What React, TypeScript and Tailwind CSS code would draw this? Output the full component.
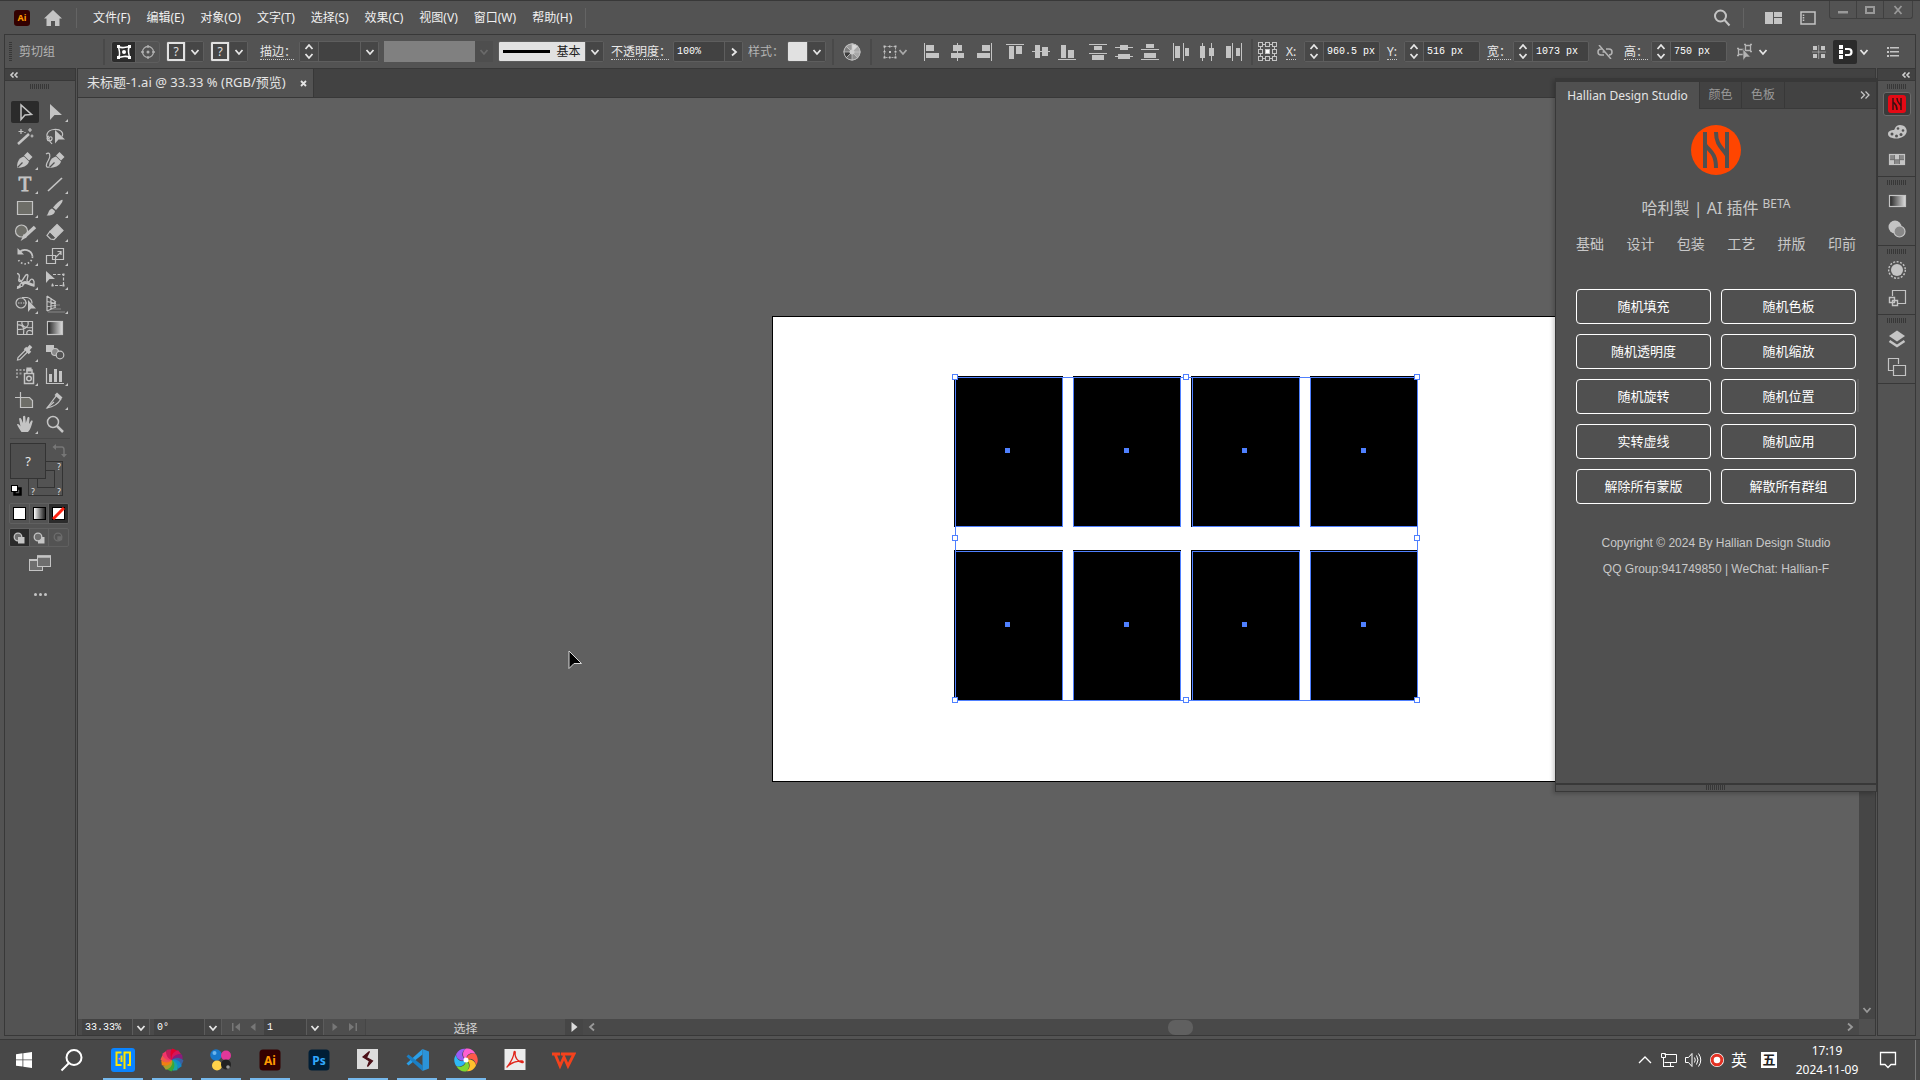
import React, { type ReactNode } from "react";

const UI = "font-['Noto_Sans','Noto_Sans_CJK_SC',sans-serif]";
const FIELD_TEXT = "font-['Liberation_Mono','Noto_Sans_CJK_SC',monospace] text-[10px] text-white";

/* ---------- small shared pieces ---------- */

function Chevron({ dir = "down", className = "text-[#e6e6e6]" }: { dir?: "down" | "up" | "right" | "left"; className?: string }) {
  const d = {
    down: "M1.5 3l3.5 4 3.5-4",
    up: "M1.5 7l3.5-4 3.5 4",
    right: "M3 1.5l4 3.5-4 3.5",
    left: "M7 1.5l-4 3.5 4 3.5",
  }[dir];
  return (
    <svg viewBox="0 0 10 10" className={`size-[10px] shrink-0 ${className}`} fill="none" stroke="currentColor" strokeWidth="1.8">
      <path d={d} />
    </svg>
  );
}

function DropButton({ label, dir = "down" }: { label: string; dir?: "down" | "right" }) {
  return (
    <button aria-label={label} className="flex h-full w-[18px] shrink-0 items-center justify-center border-l border-[#5e5e5e] bg-[#464646]">
      <Chevron dir={dir} />
    </button>
  );
}

function Spinner({ label }: { label: string }) {
  return (
    <div className="flex h-full w-[18px] shrink-0 flex-col items-center justify-center bg-[#484848]">
      <button aria-label={`${label} +`} className="flex h-[9px] items-center"><Chevron dir="up" /></button>
      <button aria-label={`${label} -`} className="flex h-[9px] items-center"><Chevron /></button>
    </div>
  );
}

function Box({ children, className = "" }: { children: ReactNode; className?: string }) {
  return <div className={`flex h-[21px] shrink-0 items-stretch overflow-hidden rounded-[2px] border border-[#5e5e5e] bg-[#424242] ${className}`}>{children}</div>;
}

function Sep({ className = "" }: { className?: string }) {
  return <div className={`h-[26px] w-[2px] shrink-0 bg-[#494949] ${className}`} />;
}

const dotted = "shrink-0 whitespace-nowrap border-b border-dotted border-[#c8c8c8] text-[12px] leading-[15px] text-[#e8e8e8]";

function NumField({ id, label, value, className = "" }: { id: string; label: string; value: string; className?: string }) {
  return (
    <div className={`flex shrink-0 items-center justify-between ${className}`}>
      <label htmlFor={id} className={dotted}>{label}</label>
      <Box className="w-[76px]">
        <Spinner label={label} />
        <input id={id} defaultValue={value} className={`w-0 flex-1 border-l border-[#5e5e5e] bg-transparent pl-[3px] ${FIELD_TEXT}`} />
      </Box>
    </div>
  );
}

function Grip({ className = "" }: { className?: string }) {
  return (
    <svg viewBox="0 0 20 5" className={`h-[5px] w-[20px] shrink-0 text-[#373737] ${className}`} fill="currentColor">
      {[0, 2, 4, 6, 8, 10, 12, 14, 16, 18].map((x) => <rect key={x} x={x} width="1" height="5" />)}
    </svg>
  );
}

/* ---------- menu bar ---------- */

const MENUS = ["文件(F)", "编辑(E)", "对象(O)", "文字(T)", "选择(S)", "效果(C)", "视图(V)", "窗口(W)", "帮助(H)"];

function MenuBar() {
  return (
    <header className="flex h-[34px] shrink-0 items-center border-t border-[#383838] pl-[14px]">
      <span className="flex size-4 items-center justify-center rounded-[3px] bg-[#330000] text-[9px] font-bold text-[#ff9a00]">Ai</span>
      <button aria-label="主页" className="ml-[13px]">
        <svg viewBox="0 0 20 16" className="h-4 w-5 text-[#c4c4c4]" fill="currentColor">
          <path d="M10 0L1 8.5h2.5V16H8v-5h4v5h4.500V8.500H19z" />
        </svg>
      </button>
      <div className="ml-[13px] h-5 w-px bg-[#646464]" />
      <nav className="ml-[16px] flex items-center gap-4 text-[12px] text-[#f0f0f0]">
        {MENUS.map((m) => <button key={m} className="whitespace-nowrap">{m}</button>)}
      </nav>
      <div className="ml-[13px] h-5 w-px bg-[#646464]" />
      <div className="ml-auto flex h-full items-center">
        <button aria-label="搜索">
          <svg viewBox="0 0 18 18" className="size-[18px] text-[#c4c4c4]" fill="none" stroke="currentColor" strokeWidth="2">
            <circle cx="7.500" cy="7" r="5.500" /><path d="M11.500 11l5 5.500" />
          </svg>
        </button>
        <div className="ml-[12px] h-5 w-px bg-[#646464]" />
        <button aria-label="排列文档" className="ml-[21px]">
          <svg viewBox="0 0 18 12" className="h-3 w-[18px] text-[#c4c4c4]" fill="currentColor">
            <path d="M0 0h8v12H0zM9 0h8v5H9zM9 6h8v6H9z" />
          </svg>
        </button>
        <button aria-label="切换工作区" className="ml-[17px]">
          <svg viewBox="0 0 16 14" className="h-[14px] w-4 text-[#c4c4c4]" fill="none" stroke="currentColor" strokeWidth="1.500">
            <path d="M1 1h14v12H1z" /><path d="M3.500 3.500v1.500M3.500 6v1.500M3.500 8.500v1.500" />
          </svg>
        </button>
        <div className="mr-[7px] ml-[13px] flex h-[18px] self-start rounded-b-[3px] border border-t-0 border-[#404040] text-[#999]">
          <button aria-label="最小化" className="flex w-[27px] items-center justify-center border-r border-[#404040]">
            <svg viewBox="0 0 10 10" className="size-[10px]" fill="currentColor"><path d="M0 6h10v2.500H0z" /></svg>
          </button>
          <button aria-label="最大化" className="flex w-[27px] items-center justify-center border-r border-[#404040]">
            <svg viewBox="0 0 10 8" className="h-2 w-[10px]" fill="none" stroke="currentColor" strokeWidth="2"><path d="M1 1h8v6H1z" /></svg>
          </button>
          <button aria-label="关闭" className="flex w-[28px] items-center justify-center">
            <svg viewBox="0 0 10 10" className="size-[10px]" fill="none" stroke="currentColor" strokeWidth="1.800"><path d="M1.500 1l7 8M8.500 1l-7 8" /></svg>
          </button>
        </div>
      </div>
    </header>
  );
}

/* ---------- control bar ---------- */

type R = [number, number, number, number];
const ALIGN: { name: string; r: R[] }[][] = [
  [
    { name: "水平左对齐", r: [[1, 0, 1, 18], [3, 2, 8, 6], [3, 10, 13, 5]] },
    { name: "水平居中对齐", r: [[8, 0, 1, 18], [4, 2, 9, 6], [2, 10, 13, 5]] },
    { name: "水平右对齐", r: [[16, 0, 1, 18], [7, 2, 8, 6], [2, 10, 13, 5]] },
  ],
  [
    { name: "垂直顶对齐", r: [[0, 1, 18, 1], [3, 3, 5, 13], [10, 3, 6, 8]] },
    { name: "垂直居中对齐", r: [[0, 8, 18, 1], [3, 2, 5, 13], [10, 4, 6, 9]] },
    { name: "垂直底对齐", r: [[0, 16, 18, 1], [3, 2, 5, 13], [10, 7, 6, 8]] },
  ],
  [
    { name: "垂直顶分布", r: [[0, 1, 18, 1], [5, 3, 8, 4], [0, 10, 18, 1], [3, 12, 12, 5]] },
    { name: "垂直居中分布", r: [[0, 4, 18, 1], [5, 2, 8, 5], [0, 13, 18, 1], [3, 11, 12, 5]] },
    { name: "垂直底分布", r: [[5, 1, 8, 4], [0, 6, 18, 1], [3, 10, 12, 5], [0, 16, 18, 1]] },
  ],
  [
    { name: "水平左分布", r: [[1, 0, 1, 18], [3, 3, 5, 12], [11, 0, 1, 18], [13, 5, 4, 8]] },
    { name: "水平居中分布", r: [[4, 0, 1, 18], [2, 3, 5, 12], [13, 0, 1, 18], [11, 5, 5, 8]] },
    { name: "水平右分布", r: [[2, 3, 5, 12], [8, 0, 1, 18], [12, 5, 4, 8], [17, 0, 1, 18]] },
  ],
];

function RefPointIcon() {
  const pts = [0, 7, 14];
  return (
    <svg viewBox="0 0 19 19" className="size-[19px] text-[#c4c4c4]" fill="none" stroke="currentColor">
      <path d="M4 2.500h11M4 16.500h11M2.500 4v11M16.500 4v11" />
      {pts.flatMap((y) => pts.map((x) => (
        <rect key={`${x}-${y}`} x={x + 0.5} y={y + 0.5} width="4" height="4" fill={x === 7 && y === 7 ? "#fff" : "#535353"} />
      )))}
    </svg>
  );
}

function PaintSwatch({ label }: { label: string }) {
  return (
    <Box className="w-[38px]">
      <button aria-label={label} className="flex w-[19px] items-center justify-center border-2 border-[#e1e1e1] bg-[#464646] text-[12px] leading-none text-[#e1e1e1]">?</button>
      <DropButton label={`${label}选项`} />
    </Box>
  );
}

function ControlBar() {
  return (
    <div className="mx-1 flex h-[34px] shrink-0 items-center border-x border-t border-[#383838] pl-1">
      <svg viewBox="0 0 3 20" className="h-5 w-[3px] text-[#373737]" fill="currentColor">
        {[0, 2, 4, 6, 8, 10, 12, 14, 16, 18].map((y) => <rect key={y} y={y} width="3" height="1" />)}
      </svg>
      <span className="ml-[7px] w-[84px] text-[12px] text-[#b4b4b4]">剪切组</span>
      <Sep />
      <div className="ml-[6px] flex h-[22px] shrink-0 overflow-hidden rounded-[3px] border border-[#5e5e5e]">
        <button aria-label="编辑剪切路径" className="flex w-[23px] items-center justify-center bg-[#2b2b2b]">
          <svg viewBox="0 0 16 16" className="size-4 text-white" fill="none" stroke="currentColor" strokeWidth="1.500">
            <path d="M2.500 2.500Q5 4 8 3.500t5.500-1Q12 5 12.500 8t1 5.500Q11 12 8 12.500t-5.500 1Q4 11 3.500 8t-1-5.500z" />
            <path d="M1 1h3v3H1zM12 1h3v3h-3zM1 12h3v3H1zM12 12h3v3h-3z" fill="currentColor" stroke="none" />
            <circle cx="8" cy="8" r="2" fill="currentColor" stroke="none" />
          </svg>
        </button>
        <button aria-label="编辑内容" className="flex w-[24px] items-center justify-center border-l border-[#5e5e5e]">
          <svg viewBox="0 0 16 16" className="size-4 text-[#b0b0b0]" fill="none" stroke="currentColor" strokeWidth="1.300">
            <circle cx="8" cy="8" r="5.500" /><path d="M8 1v3M8 12v3M1 8h3M12 8h3" />
            <circle cx="8" cy="8" r="1.500" fill="currentColor" stroke="none" />
          </svg>
        </button>
      </div>
      <div className="ml-[6px] flex gap-[6px]">
        <PaintSwatch label="填色" />
        <PaintSwatch label="描边" />
      </div>
      <label htmlFor="stroke" className={`ml-[12px] w-[34px] ${dotted}`}>描边：</label>
      <Box className="ml-[5px] w-[80px]">
        <Spinner label="描边" />
        <input id="stroke" defaultValue="" className={`w-0 flex-1 border-l border-[#5e5e5e] bg-transparent pl-1 ${FIELD_TEXT}`} />
        <DropButton label="描边粗细" />
      </Box>
      <div className="ml-[5px] h-[21px] w-[91px] shrink-0 bg-[#808080]" />
      <button aria-label="变量宽度配置文件" disabled className="flex h-[21px] w-[18px] shrink-0 items-center justify-center bg-[#4e4e4e]">
        <Chevron className="text-[#6a6a6a]" />
      </button>
      <Box className="ml-[5px] w-[106px]">
        <button className="flex flex-1 items-center justify-center gap-[6px] bg-[#e1e1e1] text-[12px] text-[#222]">
          <span className="h-[3px] w-[47px] bg-black" />基本
        </button>
        <DropButton label="画笔定义" />
      </Box>
      <label htmlFor="opacity" className={`ml-[7px] w-[58px] ${dotted}`}>不透明度：</label>
      <Box className="ml-[4px] w-[70px]">
        <input id="opacity" defaultValue="100%" className={`w-0 flex-1 bg-transparent pl-[3px] ${FIELD_TEXT}`} />
        <DropButton label="不透明度滑块" dir="right" />
      </Box>
      <span className="ml-[5px] w-[36px] shrink-0 overflow-hidden whitespace-nowrap text-[12px] text-[#b4b4b4]">样式：</span>
      <Box className="ml-[3px] w-[39px]">
        <button aria-label="图形样式" className="w-[19px] bg-[#e1e1e1]" />
        <DropButton label="图形样式选项" />
      </Box>
      <Sep className="ml-[6px]" />
      <button aria-label="重新着色图稿" className="ml-[9px] shrink-0">
        <svg viewBox="0 0 18 18" className="size-[18px]">
          <circle cx="9" cy="9" r="8.500" fill="#a8a8a8" />
          <path d="M9 9L9 .5A8.500 8.500 0 0 0 2.500 3.500z" fill="#999" /><path d="M9 9L.5 9A8.500 8.500 0 0 1 2.500 3.500z" fill="#7c7c7c" />
          <path d="M9 9L.5 9A8.500 8.500 0 0 0 3 15z" fill="#3c3c3c" /><path d="M9 9L3 15A8.500 8.500 0 0 0 9 17.500z" fill="#6a6a6a" />
          <path d="M9 9V.5A8.500 8.500 0 0 1 15 3z" fill="#d8d8d8" /><path d="M9 9L15 15A8.500 8.500 0 0 1 9 17.500z" fill="#8f8f8f" />
          <circle cx="9" cy="9" r="8" fill="none" stroke="#bbb" />
          <path d="M9 .5v17M.5 9h17M3 3l12 12M15 3L3 15" stroke="#c8c8c8" strokeWidth=".7" />
          <circle cx="9" cy="9" r="2.500" fill="#ccc" />
        </svg>
      </button>
      <Sep className="ml-[9px]" />
      <button aria-label="对齐所选对象" className="ml-[10px] flex shrink-0 items-center">
        <svg viewBox="0 0 16 16" className="size-4 text-[#c4c4c4]" fill="none" stroke="currentColor">
          <path d="M2.500 2.500h11v11h-11z" strokeDasharray="2 1" strokeWidth=".8" />
          <path d="M1.500 1.500h2v2h-2zM12.500 1.500h2v2h-2zM1.500 12.500h2v2h-2zM12.500 12.500h2v2h-2zM7 7h2v2H7zM7 1.500h1.500v2H7zM7 12.500h1.500v2H7zM1.500 7h2v1.500h-2zM12.500 7h2v1.500h-2z" fill="currentColor" stroke="none" />
        </svg>
        <Chevron className="text-[#aaa]" />
      </button>
      <div className="ml-[15px] flex shrink-0 gap-[13px]">
        {ALIGN.map((g, i) => (
          <div key={i} className="flex gap-2">
            {g.map((a) => (
              <button key={a.name} aria-label={a.name}>
                <svg viewBox="0 0 18 18" className="size-[18px] text-[#c4c4c4]" fill="currentColor">
                  {a.r.map(([x, y, w, h], j) => <rect key={j} x={x} y={y} width={w} height={h} />)}
                </svg>
              </button>
            ))}
          </div>
        ))}
      </div>
      <Sep className="ml-[9px]" />
      <button aria-label="参考点" className="ml-[5px] shrink-0"><RefPointIcon /></button>
      <NumField id="px" label="X:" value="960.5 px" className="ml-[9px] w-[94px]" />
      <NumField id="py" label="Y:" value="516 px" className="ml-[7px] w-[93px]" />
      <NumField id="pw" label="宽：" value="1073 px" className="ml-[7px] w-[102px]" />
      <button aria-label="约束宽度和高度比例" className="ml-[8px] shrink-0">
        <svg viewBox="0 0 16 14" className="h-[14px] w-4 text-[#b4b4b4]" fill="none" stroke="currentColor" strokeWidth="1.500">
          <path d="M6 4H4a3 3 0 0 0 0 6h3M9 4h3a3 3 0 0 1 0 6M5.500 7H8M2 0l12 14" />
        </svg>
      </button>
      <NumField id="ph" label="高：" value="750 px" className="ml-[11px] w-[103px]" />
      <button aria-label="隔离选中的对象" className="ml-[9px] flex shrink-0 items-center gap-[4px]">
        <svg viewBox="0 0 18 18" className="size-[18px] text-[#b4b4b4]" fill="none" stroke="currentColor" strokeWidth="1.300">
          <path d="M2.500 6.500h5v5h-5zM9.500 2.500h5v5h-5zM1 5.500h2M1 12.500h2M8 1.500h2M14 1.500h2M14 8.500h2" />
          <path d="M7 6v11.500l3-3.500h4.500z" fill="currentColor" stroke="#535353" strokeWidth=".6" />
        </svg>
        <Chevron />
      </button>
      <div className="mr-[16px] ml-auto flex shrink-0 items-center">
        <svg viewBox="0 0 14 14" className="size-[14px] text-[#c4c4c4]" fill="currentColor">
          <path d="M1 1h4v4H1zM9 1h4v4H9zM1 9h4v4H1zM9 9h4v4H9z" /><path d="M6.700 0v14M0 7h14" stroke="currentColor" strokeWidth=".6" />
        </svg>
        <button aria-label="对齐像素" className="ml-[7px] flex size-6 items-center justify-center rounded-[2px] bg-[#2b2b2b]">
          <svg viewBox="0 0 16 16" className="size-4 text-white" fill="none" stroke="currentColor" strokeWidth="2.200">
            <path d="M2 1h4v4H2zM2 6h4v4H2zM2 11h4v4H2z" fill="currentColor" stroke="none" /><path d="M8 5h3.500a2.500 2.500 0 0 1 0 6H8" />
          </svg>
        </button>
        <span className="ml-[2px] flex"><Chevron /></span>
        <button aria-label="控制菜单" className="ml-[18px]">
          <svg viewBox="0 0 12 10" className="h-[10px] w-3 text-[#c4c4c4]" fill="currentColor">
            <path d="M0 0h2v2H0zM3 0h9v1.500H3zM0 4h2v2H0zM3 4h9v1.500H3zM0 8h2v2H0zM3 8h9v1.500H3z" />
          </svg>
        </button>
      </div>
    </div>
  );
}

/* ---------- tool panel ---------- */

const pen = (
  <g fill="currentColor" stroke="none">
    <path d="M7 20c0-5 1-10 7-11.500l5 5C17.500 18.500 12.500 19.500 7 20z" />
    <path d="M14 7.500L17.500 4l5 5-3.500 3.500z" />
    <path d="M7.500 19.500l5-5" stroke="#535353" />
  </g>
);

const TOOLS: { name: string; sub?: boolean; el: ReactNode }[] = [
  { name: "选择工具", el: <path d="M11 5v14.500l4-4.500 6.500-.5z" strokeWidth="1.500" /> },
  { name: "直接选择工具", sub: true, el: <path d="M10 4v16l4.500-5H22z" fill="currentColor" stroke="none" /> },
  { name: "魔棒工具", el: <><path d="M8 20L19 10" strokeWidth="2.500" /><path d="M11 5v5M8.500 7.500h5M20 4v4M18 6h4M22 10.500v3M20.500 12h3M15 8v1" strokeWidth="1.200" /></> },
  { name: "套索工具", el: <><path d="M9 15C5 12 7 6 14 5.500s10 3 8 7M9 12a2.500 2.500 0 1 0 3 3c.500-3-3-3-3 0s2 3 3 5" /><path d="M15 6v13.500l3.500-4H25z" fill="currentColor" stroke="none" /></> },
  { name: "钢笔工具", sub: true, el: pen },
  { name: "曲率工具", el: <><g transform="translate(2 0)">{pen}</g><path d="M6 6c4-3 5 2 2.500 6S5 20 9 19" /></> },
  { name: "文字工具", sub: true, el: <text x="15" y="19" textAnchor="middle" fontSize="21" fontFamily="Liberation Serif, serif" fill="currentColor" strokeWidth=".8">T</text> },
  { name: "直线段工具", sub: true, el: <path d="M8 19L22 6" strokeWidth="1.700" /> },
  { name: "矩形工具", sub: true, el: <path d="M7.500 5.500h15v13h-15z" fill="#6e6e68" /> },
  { name: "画笔工具", sub: true, el: <g fill="currentColor" stroke="none"><path d="M22.500 4c1 1-3 6.500-6.500 10l-3-2.500C16 8 21.500 3 22.500 4z" /><path d="M12 12.500l3 2.500c-.5 4-5 5-8.500 4.500 2-1 1.500-5.500 5.500-7z" /></g> },
  { name: "Shaper 工具", sub: true, el: <><circle cx="11.500" cy="11" r="6" fill="#6e6e68" /><path d="M25 7L14 17" strokeWidth="3.500" /><path d="M14 15l2 2-4 2.500z" fill="currentColor" /></> },
  { name: "橡皮擦工具", sub: true, el: <><path d="M17 4.500l6 6-7 7-6-6z" fill="currentColor" /><path d="M10 11.500l6 6-2 2-3.500-.5L7 15.500z" /></> },
  { name: "旋转工具", sub: true, el: <><path d="M9 9a7.500 7.500 0 0 1 13.500 3.500" strokeWidth="1.700" /><path d="M7.500 4v6.500H14z" fill="currentColor" stroke="none" /><path d="M22.500 12.500A7.500 7.500 0 0 1 8 15" strokeDasharray="1.500 2" strokeWidth="1.700" /></> },
  { name: "比例缩放工具", sub: true, el: <><path d="M12.500 4.500h11v11h-11zM6.500 11.500h9v8h-9zM16 13l5-5M17.500 7.500h3.500v3.500" /></> },
  { name: "宽度工具", sub: true, el: <><path d="M7 5.500c2 0 3 2 2 5s1 4 3 2 3-6 5-6 0 4 0 6 2 2 3 0 3-2 4 1v5" strokeWidth="1.300" /><path d="M7 19.500c4 .5 4-5 8-5s5 3 9 2.500" strokeWidth="2.800" /><path d="M9 11l5 6" /><circle cx="11.500" cy="17" r="1.500" fill="#535353" /></> },
  { name: "自由变换工具", sub: true, el: <><path d="M13 6.500h10.500v11H12.500V15" strokeDasharray="3 1.500" /><path d="M22.500 5.500h2v2h-2zM22.500 16.500h2v2h-2zM11.500 16.500h2v2h-2z" fill="currentColor" stroke="none" /><path d="M6 3v12l3.500-4H15z" fill="currentColor" stroke="none" /></> },
  { name: "形状生成器工具", sub: true, el: <><circle cx="11" cy="11" r="5" /><path d="M12 5.500h5a5.500 5.500 0 0 1 5 6" /><path d="M8 11h9" strokeDasharray="1.500 1" /><path d="M18 8v12l3-3.500h5z" fill="currentColor" stroke="none" /></> },
  { name: "透视网格工具", sub: true, el: <><path d="M7 4v15M11 6v11.500M15 9v7M7 4l9 6M7 9.500l9 2M7 14.500l9-1M7 19l9-4" /><path d="M16 13h4M12 17h9M8 20h17" stroke="#888" /></> },
  { name: "网格工具", el: <><path d="M7.500 5.500h15v13h-15z" /><path d="M7.500 9c6-1 7 4 6 9.500M12 5.500c-1 5 4 7 10.500 6M18 5.500c1 4-1 8-10.500 8M17 18.500c-1-4 2-5 5.500-3" /></> },
  { name: "渐变工具", el: <><rect x="7.500" y="5.500" width="15" height="13" fill="url(#grad)" /></> },
  { name: "吸管工具", sub: true, el: <><path d="M16 9.500l-8 8-.5 2.500 2.500-.5 8-8" /><path d="M15 8l5 5M17 10.500l4-4.500" strokeWidth="3.500" /></> },
  { name: "混合工具", el: <><path d="M6 5h8v7H6z" fill="currentColor" stroke="none" /><circle cx="15" cy="12" r="3.500" fill="#888" /><circle cx="20" cy="15" r="3.800" fill="#535353" /></> },
  { name: "符号喷枪工具", sub: true, el: <><path d="M14.500 9.500h9v10h-9zM17 9V6h5v3" strokeWidth="1.500" /><path d="M17 4h4v3h-4z" fill="currentColor" /><circle cx="19" cy="14.500" r="2.300" strokeWidth="1.500" /><path d="M6 5h2v2H6zM9.500 5h2v2h-2zM13 5h2v2h-2zM6 8.500h2v2H6zM9.500 8.500h2v2h-2zM6 12h2v2H6z" fill="#999" stroke="none" /></> },
  { name: "柱形图工具", sub: true, el: <><path d="M6.500 4v15.500H24" /><path d="M9 10h3v8H9zM14 5h3v13h-3zM19 7h3v11h-3z" fill="currentColor" stroke="none" /></> },
  { name: "画板工具", el: <><path d="M10.500 9.500h9l3 3v7h-12z" fill="#6e6e68" /><path d="M5 9.500h6M10.500 4v6" /></> },
  { name: "切片工具", sub: true, el: <><path d="M7 20L17 7l4 4c-3 5-8 8-14 9z" /><path d="M17 4.500l5.500 5-2.500 2.500-5.500-5z" fill="currentColor" stroke="none" /><path d="M7 20l7-6" /></> },
  { name: "抓手工具", sub: true, el: <path d="M11.500 20C9.500 17 8 15 7 12.500c1-1.200 2.500 0 3.500 2L9 6.500c1-1.200 2-.5 2.500.8L13 11V4.500c.8-1 2-1 2.300.2L15.800 11l1.700-5.500c1-1 2-.3 2 .8L19 12l2.300-3.500c1.200-.3 1.700.5 1.200 1.500-1 3.500-2 7.500-4.500 10z" fill="currentColor" stroke="none" /> },
  { name: "缩放工具", el: <><circle cx="13" cy="10" r="5.500" strokeWidth="1.500" /><path d="M17 14l6 6" strokeWidth="2.500" /></> },
];

function Tool({ t, on }: { t: (typeof TOOLS)[number]; on: boolean }) {
  return (
    <button aria-label={t.name} className={`m-px h-[22px] w-[28px] rounded-[2px] text-[#c4c4c4] ${on ? "bg-[#2b2b2b]" : ""}`}>
      <svg viewBox="1 1 28 22" className="h-[22px] w-[28px]" fill="none" stroke="currentColor" strokeWidth="1.200">
        {t.el}
        {t.sub && <path d="M28 19v3h-3z" fill="currentColor" stroke="none" />}
      </svg>
    </button>
  );
}

function ToolPanel() {
  return (
    <aside className="flex w-[72px] shrink-0 flex-col border border-[#383838]">
      <button aria-label="折叠面板" className="flex h-3 shrink-0 items-center border-b border-[#383838] bg-[#424242] pl-1">
        <DoubleLeft />
      </button>
      <Grip className="mt-[3px] self-center" />
      <div className="mt-[11px] grid grid-cols-2 self-center">
        {TOOLS.map((t, i) => <Tool key={t.name} t={t} on={i === 0} />)}
      </div>
      <div className="mx-[5px] mt-[2px] h-px bg-[#484848]" />
      <div className="mt-1 ml-[5px] w-[60px]">
        <svg viewBox="0 0 60 56" className="h-14 w-[60px]" fill="none" stroke="#333">
          <rect x="18.500" y="18.500" width="34" height="34" fill="#535353" />
          <rect x="27.500" y="27.500" width="17" height="17" />
          <rect x=".5" y=".5" width="35" height="35" fill="#4e4e4e" />
          <path d="M46 4h6q2 0 2 3v5" stroke="#777" strokeWidth="1.500" />
          <path d="M46 1v6l-3.500-3zM51 11h6l-3 3.500z" fill="#777" stroke="none" />
          <g fill="#e8e8e8" stroke="none" fontFamily="Noto Sans, sans-serif" textAnchor="middle">
            <text x="18" y="23" fontSize="13">?</text>
            <text x="49" y="27" fontSize="8">?</text>
            <text x="23" y="52" fontSize="8">?</text>
            <text x="49" y="52" fontSize="8">?</text>
          </g>
          <rect x="4.500" y="45.500" width="6" height="6" stroke="#000" strokeWidth="2.500" />
          <rect x="1.500" y="42.500" width="6" height="6" fill="#fff" stroke="#000" />
        </svg>
      </div>
      <div className="mt-1 ml-1 flex h-[21px] w-[60px] overflow-hidden rounded-[2px] border border-[#606060]">
        <button aria-label="颜色" className="flex flex-1 items-center justify-center"><span className="size-[13px] border border-black bg-white" /></button>
        <button aria-label="渐变" className="flex flex-1 items-center justify-center border-x border-[#606060]"><span className="size-[13px] border border-black bg-linear-to-r from-white to-[#222]" /></button>
        <button aria-label="无" className="flex flex-1 items-center justify-center bg-[#2b2b2b]">
          <svg viewBox="0 0 13 13" className="size-[13px]"><rect x=".5" y=".5" width="12" height="12" fill="#fff" stroke="#000" /><path d="M1 12L12 1" stroke="#f21" strokeWidth="3" /></svg>
        </button>
      </div>
      <div className="mt-1 ml-1 flex h-[19px] w-[60px] overflow-hidden rounded-[2px] border border-[#606060]">
        {["正常绘图", "背面绘图", "内部绘图"].map((n, i) => (
          <button key={n} aria-label={n} className={`flex flex-1 items-center justify-center ${i === 0 ? "bg-[#2b2b2b] text-[#c4c4c4]" : i === 1 ? "border-x border-[#606060] text-[#c4c4c4]" : "text-[#6c6c6c]"}`}>
            <svg viewBox="0 0 12 12" className="size-3" fill="none" stroke="currentColor" strokeWidth="1.300">
              {i === 1 && <rect x="5" y="5" width="6.500" height="6.500" fill="currentColor" stroke="none" />}
              <circle cx="5" cy="5" r="3.800" fill={i === 2 ? "none" : "#6e6e6e"} />
              {i === 0 && <rect x="5" y="5" width="6.500" height="6.500" fill="currentColor" stroke="none" />}
              {i === 2 && <path d="M5 5h3.500v2.500H5z" fill="currentColor" />}
            </svg>
          </button>
        ))}
      </div>
      <button aria-label="更改屏幕模式" className="mt-2 self-center">
        <svg viewBox="0 0 22 17" className="h-[17px] w-[22px] text-[#c4c4c4]" fill="#6e6e6e" stroke="currentColor">
          <rect x=".5" y="4.500" width="13" height="11" /><path d="M0 5h14" strokeWidth="2" />
          <rect x="8.500" y="1" width="13" height="10.500" /><path d="M8 1.500h14" strokeWidth="2.500" />
        </svg>
      </button>
      <button aria-label="编辑工具栏" className="mt-[21px] flex gap-[2px] self-center">
        {[0, 1, 2].map((i) => <span key={i} className="size-[3px] rounded-full bg-[#c4c4c4]" />)}
      </button>
    </aside>
  );
}

function DoubleLeft() {
  return (
    <svg viewBox="0 0 10 6" className="h-[6px] w-[10px] text-[#d0d0d0]" fill="none" stroke="currentColor" strokeWidth="1.600">
      <path d="M4.500 .5L2 3l2.500 2.500M8.500 .5L6 3l2.500 2.500" />
    </svg>
  );
}

/* ---------- canvas ---------- */

const OX = 78;
const OY = 98;

const COLS = [
  { x: 954, cls: "w-[109px] pl-px", pad: "pr-[3px]" },
  { x: 1073, cls: "w-[108px]", pad: "pr-px" },
  { x: 1191, cls: "w-[109px] pl-px", pad: "pr-[3px]" },
  { x: 1310, cls: "w-[108px]", pad: "pr-px" },
];
const ROWS = [376, 550];
const HANDLES: [number, number][] = [
  [952, 374], [1183, 374], [1414, 374], [952, 535], [1414, 535], [952, 697], [1183, 697], [1414, 697],
];

function Canvas() {
  return (
    <div className="relative min-w-0 flex-1 overflow-hidden bg-[#606060]">
      <div className="absolute top-[218px] left-[694px] h-[466px] w-[827px] border border-black bg-white" />
      {ROWS.flatMap((y) => COLS.map((c) => (
        <div key={`${c.x}-${y}`} className={`absolute h-[151px] bg-black pt-px ${c.cls}`} style={{ left: c.x - OX, top: y - OY }}>
          <div className={`flex h-full items-center justify-center border border-[#4f80ff] pb-[4px] ${c.pad}`}>
            <span className="size-[5px] bg-[#4f80ff]" />
          </div>
        </div>
      )))}
      <div className="absolute top-[279px] left-[877px] h-[324px] w-[463px] border border-[#4f80ff]" />
      {HANDLES.map(([x, y]) => (
        <span key={`${x}-${y}`} className="absolute size-[6px] border border-[#4f80ff] bg-white" style={{ left: x - OX, top: y - OY }} />
      ))}
      <svg viewBox="0 0 15 20" className="absolute top-[552px] left-[490px] h-5 w-[15px]">
        <path d="M1 1v17.500l5-5h7.500z" fill="#000" stroke="#d8d8d8" />
      </svg>
    </div>
  );
}

function StatusBar() {
  const field = `h-full bg-[#424242] pl-[3px] ${FIELD_TEXT}`;
  const drop = "flex h-full w-[18px] items-center justify-center bg-[#464646] border-x border-[#5c5c5c] pt-[2px]";
  return (
    <footer className="flex h-4 shrink-0 items-center bg-[#4a4a4a] pl-1">
      <input aria-label="缩放" defaultValue="33.33%" className={`${field} w-[50px]`} />
      <button aria-label="缩放级别" className={drop}><Chevron /></button>
      <input aria-label="旋转" defaultValue="0°" className={`${field} ml-1 w-[50px]`} />
      <button aria-label="旋转角度" className={drop}><Chevron /></button>
      <div className="flex h-full w-[42px] items-center justify-center gap-[9px] bg-[#4e4e4e] text-[#777]">
        <svg viewBox="0 0 10 8" className="h-2 w-[10px]" fill="currentColor"><path d="M1 0h1.500v8H1zM9 0v8L4 4z" /></svg>
        <svg viewBox="0 0 6 8" className="h-2 w-[6px]" fill="currentColor"><path d="M5.500 0v8L.5 4z" /></svg>
      </div>
      <input aria-label="画板导航" defaultValue="1" className={`${field} w-[42px]`} />
      <button aria-label="选择画板" className={drop}><Chevron /></button>
      <div className="flex h-full w-[42px] items-center justify-center gap-[10px] border-r border-[#464646] bg-[#4e4e4e] text-[#777]">
        <svg viewBox="0 0 6 8" className="h-2 w-[6px]" fill="currentColor"><path d="M.5 0v8l5-4z" /></svg>
        <svg viewBox="0 0 10 8" className="h-2 w-[10px]" fill="currentColor"><path d="M7.500 0H9v8H7.500zM1 0v8l5-4z" /></svg>
      </div>
      <div className="flex h-full w-[199px] items-center justify-center bg-[#505050] pt-[3px] text-[12px] leading-4 text-[#d0d0d0]">选择</div>
      <button aria-label="状态选项" className="flex h-full w-[18px] items-center justify-center bg-[#464646] text-[#ddd]">
        <svg viewBox="0 0 7 10" className="h-[10px] w-[7px]" fill="currentColor"><path d="M.5 0v10l6-5z" /></svg>
      </button>
      <div className="flex h-full flex-1 items-center bg-[#494949] px-1">
        <Chevron dir="left" className="text-[#999]" />
        <div className="flex flex-1 pl-[45%]"><div className="h-[15px] w-[25px] rounded-[7px] bg-[#606060]" /></div>
        <Chevron dir="right" className="text-[#999]" />
      </div>
      <div className="h-full w-4 bg-[#505050]" />
    </footer>
  );
}

/* ---------- plugin panel ---------- */

const ACTIONS = ["随机填充", "随机色板", "随机透明度", "随机缩放", "随机旋转", "随机位置", "实转虚线", "随机应用", "解除所有蒙版", "解散所有群组"];

function PluginPanel() {
  return (
    <section className="absolute top-[9px] -right-[2px] z-10 flex h-[714px] w-[322px] flex-col border border-t-4 border-[#383838] bg-[#505050] shadow-[-2px_2px_4px_rgba(0,0,0,0.2)]">
      <div className="flex h-[27px] shrink-0 border-b border-[#3a3a3a] bg-[#424242] text-[12px] text-[#999]">
        <button className="-mb-px w-[143px] bg-[#505050] text-[12px] whitespace-nowrap text-[#e4e4e4]">Hallian Design Studio</button>
        <button className="w-[43px] border-x border-[#383838]">颜色</button>
        <button className="w-[43px] border-r border-[#383838]">色板</button>
        <button aria-label="展开" className="mr-[6px] ml-auto">
          <svg viewBox="0 0 10 8" className="h-2 w-[10px] text-[#c4c4c4]" fill="none" stroke="currentColor" strokeWidth="1.300"><path d="M1 .5L4.500 4 1 7.500M5.500 .5L9 4 5.500 7.500" /></svg>
        </button>
      </div>
      <div className="relative flex flex-1 flex-col items-center px-5 pt-4 text-[#c8c8c8]">
        <svg viewBox="0 0 50 50" className="size-[50px] shrink-0">
          <circle cx="25" cy="25" r="25" fill="#ff4500" />
          <g fill="none" stroke="#505050" strokeWidth="4">
            <path d="M14 7v36M36 7v36" />
            <path d="M14 19.500C18 26 25 27 25 43M25 7c0 14 7 16 11 23.500" />
          </g>
        </svg>
        <h1 className="mt-[21px] flex gap-1 text-[16px] leading-6 whitespace-nowrap">
          哈利製 | AI 插件<sup className="top-0 text-[12px] leading-4">BETA</sup>
        </h1>
        <nav className="mt-[14px] flex w-full justify-between text-[14px] leading-5">
          {["基础", "设计", "包装", "工艺", "拼版", "印前"].map((n) => <a key={n} href="#" className="whitespace-nowrap">{n}</a>)}
        </nav>
        <div className="mt-[35px] grid w-full grid-cols-2 gap-[10px]">
          {ACTIONS.map((a) => (
            <button key={a} className="h-[35px] rounded-[4px] border border-white text-[13px] text-white">{a}</button>
          ))}
        </div>
        <div className="mt-[26px] text-center font-['Liberation_Sans',sans-serif] text-[12px] leading-[26px] whitespace-nowrap">
          <p>Copyright © 2024 By Hallian Design Studio</p>
          <p>QQ Group:941749850 | WeChat: Hallian-F</p>
        </div>
        <span className="absolute top-[270px] right-[17px] h-[33px] w-[2px] bg-[#606060]" />
      </div>
      <div className="flex h-[8px] shrink-0 justify-center border-t-2 border-[#383838] bg-[#535353]"><Grip /></div>
    </section>
  );
}

/* ---------- document column ---------- */

function DocumentArea() {
  return (
    <main className="relative ml-px flex min-w-0 flex-1 flex-col border border-[#383838]">
      <div className="flex h-[29px] shrink-0 items-stretch border-b border-[#383838] bg-[#424242]">
        <div className="flex w-[236px] items-center border-r border-[#383838] bg-[#535353] pl-[9px] text-[13px] text-[#e4e4e4]">
          <span className="whitespace-nowrap">未标题-1.ai @ 33.33 % (RGB/预览)</span>
          <button aria-label="关闭文档" className="mr-[6px] ml-auto">
            <svg viewBox="0 0 7 7" className="size-[7px]" stroke="currentColor" strokeWidth="1.800"><path d="M1 1l5 5M6 1L1 6" /></svg>
          </button>
        </div>
      </div>
      <div className="flex min-h-0 flex-1">
        <Canvas />
        <div className="flex w-4 shrink-0 flex-col items-center justify-end bg-[#464646] pb-1"><Chevron className="text-[#999]" /></div>
      </div>
      <StatusBar />
      <PluginPanel />
    </main>
  );
}

/* ---------- right dock ---------- */

const DOCK: { name: string; el: ReactNode }[][] = [
  [
    { name: "Hallian Design Studio", el: <><rect x="1" y="1" width="18" height="18" rx="3" fill="#e50914" stroke="none" /><path d="M6 4v12M14 4v12M6 8c2 2 4 2 4 8M10 4c0 5 3 5 4 8" stroke="#3a1010" strokeWidth="1.500" /></> },
    { name: "颜色", el: <><path d="M1 12c0-3 3-4 6-4C8 7.500 8 3 13 3s7.500 4 6.500 7.500S14 16.500 9.500 16.500 1 15 1 12z" fill="currentColor" stroke="none" /><g fill="#535353" stroke="none"><circle cx="5" cy="12" r="1.500" /><circle cx="9.500" cy="14" r="1.500" /><circle cx="14" cy="12.500" r="1.500" /><circle cx="16" cy="8.500" r="1.300" /><circle cx="11" cy="6.500" r="1.300" /></g></> },
    { name: "色板", el: <><rect x="2.500" y="4.500" width="15" height="10" fill="#888" /><path d="M7.500 5h5v5h-5zM3 10h4.500v4H3zM12.500 10H17v4h-4.500z" fill="#c4c4c4" stroke="none" /><path d="M7.500 5v9M12.500 5v9M3 9.700h14" stroke="#6a6a6a" strokeWidth=".8" /></> },
  ],
  [
    { name: "渐变", el: <rect x="2.500" y="4.500" width="16" height="11" fill="url(#grad)" /> },
    { name: "透明度", el: <><circle cx="8" cy="8" r="6.500" fill="currentColor" stroke="none" /><circle cx="12.500" cy="12.500" r="5.500" fill="#888" /></> },
  ],
  [
    { name: "外观", el: <><circle cx="10" cy="10" r="6" fill="currentColor" stroke="none" /><circle cx="10" cy="10" r="8.300" strokeDasharray="2 1.500" strokeWidth="1.400" /></> },
    { name: "图形样式", el: <><path d="M5.500 8V2.500h13v13H11" /><path d="M2.500 9.500h5v5h-5zM5.500 12.500h5v5h-5z" strokeWidth="1.400" /></> },
  ],
  [
    { name: "图层", el: <><path d="M10 1.500l8 5.500-8 5.500L2 7z" fill="currentColor" stroke="none" /><path d="M2.500 12l7.500 5 7.500-5" strokeWidth="2.500" /></> },
    { name: "画板", el: <><path d="M6 13.500H1.500v-12h10V7" /><path d="M6.500 8.500h12v10h-12z" /></> },
  ],
];

function Dock() {
  return (
    <aside className="mr-1 ml-px flex w-[39px] shrink-0 flex-col border border-[#383838]">
      <button aria-label="展开面板" className="flex h-3 shrink-0 items-center justify-end border-b border-[#383838] bg-[#424242] pr-1"><DoubleLeft /></button>
      {DOCK.map((g, i) => (
        <div key={i} className="flex flex-col items-center border-b border-[#383838] pt-[3px] pb-[4px]">
          <Grip />
          <div className={`flex flex-col gap-1 ${i === 0 ? "mt-[3px]" : "mt-1"}`}>
            {g.map((d, j) => (
              <button key={d.name} aria-label={d.name} className={`flex h-6 w-7 items-center justify-center rounded-[3px] ${i === 0 && j === 0 ? "border border-[#6a6a6a] bg-[#3a3a3a]" : ""}`}>
                <svg viewBox="0 0 20 20" className="size-5 text-[#c4c4c4]" fill="none" stroke="currentColor" strokeWidth="1.200">{d.el}</svg>
              </button>
            ))}
          </div>
        </div>
      ))}
    </aside>
  );
}

/* ---------- taskbar ---------- */

const SWIRL = ["#e4002b", "#d4145a", "#8a1c7c", "#3a5f9f", "#1289c9", "#17a5a6", "#3aa935", "#a8a02b", "#f07f13", "#ee5a4a", "#f2356a", "#c41a5a"];
const PETALS = ["#ff5fd0", "#ff5a4a", "#ffc02e", "#7fd82f", "#2fb8f5", "#9a5cf6"];

const APPS: { name: string; open: boolean; el: ReactNode }[] = [
  { name: "CP", open: true, el: <><rect width="24" height="24" rx="3" fill="#0a84ff" /><path d="M10.500 4.500H5.500v12.500h5M10.500 7.500v6.500M13.500 21V4.500h5.500v12.500h-2.500" fill="none" stroke="#ffe600" strokeWidth="2" /><circle cx="8.500" cy="10.800" r="1" fill="#ff6fae" /></> },
  { name: "色彩", open: true, el: <g>{SWIRL.map((c, i) => <path key={c} d="M12 12C9 9.500 8.500 4 12.500 .5L17 2.500C13.500 5 12.500 8 12 12z" fill={c} transform={`rotate(${i * 30} 12 12)`} />)}</g> },
  { name: "印刷", open: true, el: <><circle cx="7" cy="7" r="5.800" fill="#1877c9" /><circle cx="17" cy="7.500" r="5" fill="#e0379a" /><circle cx="8" cy="17.500" r="5" fill="#ffd24a" /><circle cx="17" cy="16.500" r="5" fill="#222" /><circle cx="5.500" cy="5" r="2" fill="#6bb5ee" /><circle cx="19" cy="19" r="1.800" fill="#999" /></> },
  { name: "Illustrator", open: true, el: <><rect x="1.500" y="1.500" width="21" height="21" rx="3.500" fill="#330000" /><text x="12" y="16.500" textAnchor="middle" fontSize="12" fontWeight="bold" fill="#ff9a00">Ai</text></> },
  { name: "Photoshop", open: false, el: <><rect x="1.500" y="1.500" width="21" height="21" rx="3.500" fill="#001e36" /><text x="12" y="16.500" textAnchor="middle" fontSize="12" fontWeight="bold" fill="#31a8ff">Ps</text></> },
  { name: "脚本", open: true, el: <><rect x="1" y="1" width="21" height="20" fill="#dcdcdc" /><path d="M13.500 3.500L7 9l6.500 4-2 5.500 5-5.500-6-3.500z" fill="#4a0e16" stroke="#4a0e16" strokeWidth="1.200" /></> },
  { name: "VS Code", open: true, el: <><path d="M17.500 6.500L3.500 17.500l-2-2L17.500 1z" fill="#2a9fe8" /><path d="M17.500 17.500L3.500 6.500l-2 2L17.500 23z" fill="#1b7fc4" /><path d="M17.500 1L24 3.500v17L17.500 23z" fill="#2b93d9" /></> },
  { name: "浏览器", open: true, el: <g>{PETALS.map((c, i) => <path key={c} d="M12 12C8 9 8 3 12 .500c5 0 8 2 9.500 5.500C17 4 12 6 12 12z" fill={c} transform={`rotate(${i * 60} 12 12)`} />)}<circle cx="12" cy="12" r="2.500" fill="#fff" /></g> },
  { name: "Acrobat", open: false, el: <><rect x="1.500" y="1" width="21" height="21" fill="#ececec" /><path d="M4.500 18.500C7 15 11 9 11 4.500c0-1.500 1.500-1.500 1.200.5C11.500 9 15 14 19 14.500c2 .3 1.500-1.500-.5-1.500-4 0-10 2-13 4.500-1.500 1.500-2 2-1 1z" fill="none" stroke="#e1251b" strokeWidth="1.300" /></> },
  { name: "WPS", open: false, el: <path d="M0 6h8M3 6l5 12 4-9 4 9 6-12H9l4 1" fill="none" stroke="#f4421c" strokeWidth="2.800" /> },
];

function Taskbar() {
  return (
    <div className="flex h-10 shrink-0 items-stretch bg-[#484848] text-white">
      <button aria-label="开始" className="flex w-12 items-center justify-center">
        <svg viewBox="0 0 16 16" className="size-4" fill="#fff"><path d="M0 2.200l6.500-.9v6.200H0zM7.300 1.200L16 0v7.500H7.300zM0 8.300h6.500v6.200L0 13.700zM7.300 8.300H16V16l-8.700-1.200z" /></svg>
      </button>
      <button aria-label="搜索" className="flex w-12 items-center justify-center">
        <svg viewBox="0 0 24 24" className="size-6" fill="none" stroke="#fff" strokeWidth="2"><circle cx="14" cy="9.500" r="7.500" /><path d="M9 15l-7.500 7.500" /></svg>
      </button>
      <div className="ml-[7px] flex gap-[9px]">
        {APPS.map((a) => (
          <button key={a.name} aria-label={a.name} className={`flex w-10 items-center justify-center border-b-2 pt-[2px] ${a.open ? "border-[#76b9ed]" : "border-transparent"}`}>
            <svg viewBox="0 0 24 24" className="size-6">{a.el}</svg>
          </button>
        ))}
      </div>
      <div className="ml-auto flex items-center">
        <svg viewBox="0 0 14 8" className="h-2 w-[14px]" fill="none" stroke="#fff" strokeWidth="1.300"><path d="M1 7l6-6 6 6" /></svg>
        <svg viewBox="0 0 18 16" className="ml-[8px] h-4 w-[18px]" fill="none" stroke="#fff"><path d="M4.500 2.500h12v8h-12M1.500 1.500h4v4h-4zM3.500 5.500v9M3 14.500h5M10.500 10.500v4M7 14.500h7" /></svg>
        <svg viewBox="0 0 18 16" className="ml-[6px] h-4 w-[18px]" fill="none" stroke="#fff"><path d="M1.500 5.500h3l3.500-4v13l-3.500-4h-3zM10.500 5.500q1.500 2.500 0 5M12.500 3.500q3 4.500 0 9M14.500 1.500q4.500 6.500 0 13" /></svg>
        <svg viewBox="0 0 14 14" className="ml-[8px] size-[14px]"><circle cx="7" cy="7" r="7" fill="#fff" /><circle cx="7" cy="7" r="4.800" fill="none" stroke="#e33224" strokeWidth="3" /></svg>
        <span className="ml-[7px] text-[16px] leading-5">英</span>
        <span className="ml-[14px] flex size-4 items-center justify-center bg-white text-[13px] font-bold text-[#222]">五</span>
        <div className="ml-4 flex w-[68px] flex-col text-center text-[12px] leading-[19px] whitespace-nowrap">
          <span>17:19</span><span>2024-11-09</span>
        </div>
        <button aria-label="通知" className="ml-[18px]">
          <svg viewBox="0 0 18 18" className="size-[18px]" fill="none" stroke="#fff" strokeWidth="1.300"><path d="M1.500 1.500h15v12H12l-3 3-3-3H1.500z" /></svg>
        </button>
        <div className="mr-1 ml-[18px] h-10 w-px bg-[#777]" />
      </div>
    </div>
  );
}

export default function App() {
  return (
    <div className={`flex h-screen w-full flex-col overflow-hidden bg-[#535353] ${UI}`}>
      <svg className="absolute size-0" aria-hidden="true">
        <defs>
          <linearGradient id="grad"><stop offset="0" stopColor="#222" /><stop offset="1" stopColor="#e0e0e0" /></linearGradient>
        </defs>
      </svg>
      <MenuBar />
      <ControlBar />
      <div className="flex min-h-0 flex-1 pl-1">
        <ToolPanel />
        <DocumentArea />
        <Dock />
      </div>
      <div className="h-1 shrink-0 border-b border-[#383838]" />
      <Taskbar />
    </div>
  );
}
